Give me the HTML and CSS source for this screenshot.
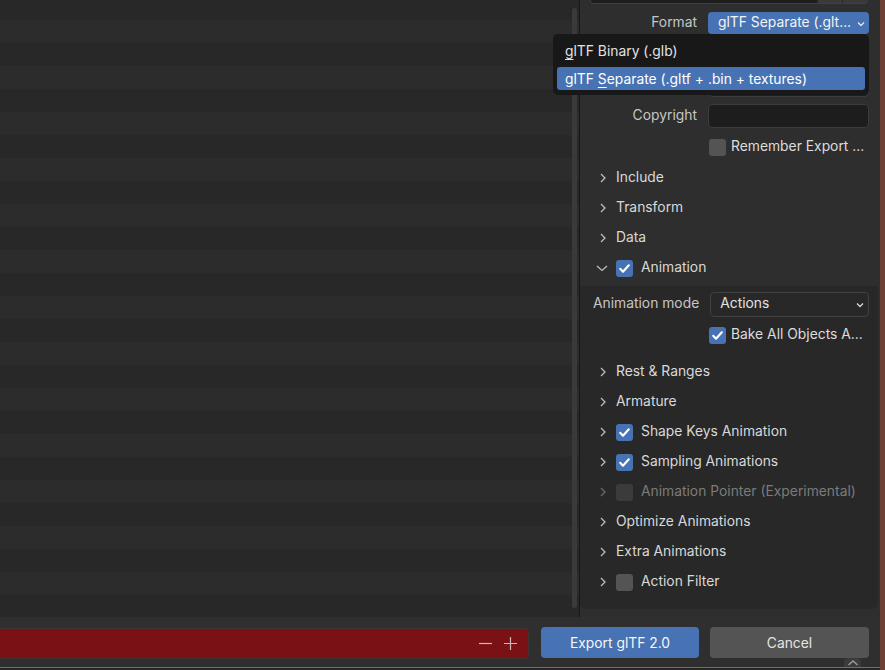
FILE: index.html
```html
<!DOCTYPE html>
<html>
<head>
<meta charset="utf-8">
<link rel="stylesheet" href="styles.css">
</head>
<body>
<div class="window">
  <div class="main">
    <div class="top">
      <div class="filelist"><div class="scrollbar"></div></div>
      <div class="sidebar">
        <div class="pathbox"><span class="pf"></span><span class="pb"></span><span class="pb"></span></div>

        <div class="prop first">
          <div class="plabel">Format</div>
          <div class="control dd-blue"><span>glTF Separate (.glt...</span><svg class="ddchev" width="8" height="6" viewBox="0 0 8 6"><path d="M1 1.5l3 3 3-3" fill="none" stroke="#e8e8e8" stroke-width="1.3"/></svg></div>
        </div>
        <div class="prop">
          <div class="plabel"></div>
          <div class="control check-ctl"><span class="cb"></span></div>
        </div>
        <div class="prop">
          <div class="plabel"></div>
          <div class="control field"></div>
        </div>
        <div class="prop">
          <div class="plabel">Copyright</div>
          <div class="control field"></div>
        </div>
        <div class="prop">
          <div class="plabel"></div>
          <div class="control check-ctl"><span class="cb"></span><span>Remember Export ...</span></div>
        </div>

        <div class="sections">
          <div class="sec"><svg class="chev" width="10" height="12" viewBox="0 0 10 12"><path d="M3 2l4 4-4 4" fill="none" stroke="#bdbdbd" stroke-width="1.3"/></svg><span>Include</span></div>
          <div class="sec"><svg class="chev" width="10" height="12" viewBox="0 0 10 12"><path d="M3 2l4 4-4 4" fill="none" stroke="#bdbdbd" stroke-width="1.3"/></svg><span>Transform</span></div>
          <div class="sec"><svg class="chev" width="10" height="12" viewBox="0 0 10 12"><path d="M3 2l4 4-4 4" fill="none" stroke="#bdbdbd" stroke-width="1.3"/></svg><span>Data</span></div>
          <div class="sec open"><svg class="chev down" width="14" height="10" viewBox="0 0 14 10"><path d="M2 3l5 4.5L12 3" fill="none" stroke="#bdbdbd" stroke-width="1.3"/></svg><span class="cb on"><svg width="17" height="17" viewBox="0 0 17 17"><path d="M4.2 8.8l2.8 2.9 5.8-6.4" fill="none" stroke="#fff" stroke-width="2.1" stroke-linecap="round" stroke-linejoin="round"/></svg></span><span>Animation</span></div>
        </div>

        <div class="subpanel">
          <div class="prop sub first">
            <div class="plabel left">Animation mode</div>
            <div class="control dd-dark"><span>Actions</span><svg class="ddchev" width="8" height="6" viewBox="0 0 8 6"><path d="M1 1.5l3 3 3-3" fill="none" stroke="#d8d8d8" stroke-width="1.3"/></svg></div>
          </div>
          <div class="prop sub">
            <div class="plabel"></div>
            <div class="control check-ctl"><span class="cb on"><svg width="17" height="17" viewBox="0 0 17 17"><path d="M4.2 8.8l2.8 2.9 5.8-6.4" fill="none" stroke="#fff" stroke-width="2.1" stroke-linecap="round" stroke-linejoin="round"/></svg></span><span>Bake All Objects A...</span></div>
          </div>
          <div class="subsecs">
            <div class="sec"><svg class="chev" width="10" height="12" viewBox="0 0 10 12"><path d="M3 2l4 4-4 4" fill="none" stroke="#bdbdbd" stroke-width="1.3"/></svg><span>Rest &amp; Ranges</span></div>
            <div class="sec"><svg class="chev" width="10" height="12" viewBox="0 0 10 12"><path d="M3 2l4 4-4 4" fill="none" stroke="#bdbdbd" stroke-width="1.3"/></svg><span>Armature</span></div>
            <div class="sec"><svg class="chev" width="10" height="12" viewBox="0 0 10 12"><path d="M3 2l4 4-4 4" fill="none" stroke="#bdbdbd" stroke-width="1.3"/></svg><span class="cb on"><svg width="17" height="17" viewBox="0 0 17 17"><path d="M4.2 8.8l2.8 2.9 5.8-6.4" fill="none" stroke="#fff" stroke-width="2.1" stroke-linecap="round" stroke-linejoin="round"/></svg></span><span>Shape Keys Animation</span></div>
            <div class="sec"><svg class="chev" width="10" height="12" viewBox="0 0 10 12"><path d="M3 2l4 4-4 4" fill="none" stroke="#bdbdbd" stroke-width="1.3"/></svg><span class="cb on"><svg width="17" height="17" viewBox="0 0 17 17"><path d="M4.2 8.8l2.8 2.9 5.8-6.4" fill="none" stroke="#fff" stroke-width="2.1" stroke-linecap="round" stroke-linejoin="round"/></svg></span><span>Sampling Animations</span></div>
            <div class="sec disabled"><svg class="chev" width="10" height="12" viewBox="0 0 10 12"><path d="M3 2l4 4-4 4" fill="none" stroke="#6a6a6a" stroke-width="1.3"/></svg><span class="cb dis"></span><span>Animation Pointer (Experimental)</span></div>
            <div class="sec"><svg class="chev" width="10" height="12" viewBox="0 0 10 12"><path d="M3 2l4 4-4 4" fill="none" stroke="#bdbdbd" stroke-width="1.3"/></svg><span>Optimize Animations</span></div>
            <div class="sec"><svg class="chev" width="10" height="12" viewBox="0 0 10 12"><path d="M3 2l4 4-4 4" fill="none" stroke="#bdbdbd" stroke-width="1.3"/></svg><span>Extra Animations</span></div>
            <div class="sec"><svg class="chev" width="10" height="12" viewBox="0 0 10 12"><path d="M3 2l4 4-4 4" fill="none" stroke="#bdbdbd" stroke-width="1.3"/></svg><span class="cb"></span><span>Action Filter</span></div>
          </div>
        </div>

        <div class="menu">
          <div class="mitem"><u>g</u>lTF Binary (.glb)</div>
          <div class="mitem active">glTF <u>S</u>eparate (.gltf + .bin + textures)</div>
        </div>
      </div>
    </div>
    <div class="bottombar">
      <div class="namefield">
        <svg width="13" height="13" viewBox="0 0 13 13"><path d="M0 6.5h13" stroke="#cdb6b6" stroke-width="1.2"/></svg>
        <svg width="13" height="13" viewBox="0 0 13 13"><path d="M0 6.5h13M6.5 0v13" stroke="#cdb6b6" stroke-width="1.2"/></svg>
      </div>
      <div class="btn primary">Export glTF 2.0</div>
      <div class="btn">Cancel</div>
      <div class="uptab"><svg width="12" height="7" viewBox="0 0 12 7"><path d="M1.5 6l4.5-4 4.5 4" fill="none" stroke="#9a9a9a" stroke-width="1.5"/></svg></div>
    </div>
    <div class="footer"></div>
  </div>
  <div class="edge"></div>
</div>
</body>
</html>
```

FILE: styles.css
```css
* { box-sizing: border-box; }
html, body { margin: 0; padding: 0; }
body {
  width: 885px;
  height: 670px;
  overflow: hidden;
  background: #2e2e2e;
  font-family: Inter, "Noto Sans", sans-serif;
  font-size: 13.85px;
  color: #d9d9d9;
}
.window { display: flex; width: 885px; height: 670px; }
.main { width: 880px; display: flex; flex-direction: column; }
.edge { width: 5px; background: #6b4136; }

.top { display: flex; height: 617px; }
.filelist {
  width: 579px;
  background: repeating-linear-gradient(to bottom, #282828 0 20px, #2c2c2c 20px 43px, #282828 43px 46px);
  display: flex;
  justify-content: flex-end;
  padding: 8px 2px 9px 0;
}
.scrollbar { width: 5px; background: #3a3a3a; border-radius: 3px; }

.sidebar {
  width: 301px;
  border-left: 1px solid #171717;
  background: #2e2e2e;
  position: relative;
}
.pathbox {
  display: flex;
  height: 4px;
  margin: 0 12px 0 10px;
  border: 1px solid #3f3f3f;
  border-top: none;
  border-radius: 0 0 4px 4px;
  overflow: hidden;
}
.pf { flex: 1; background: #1d1d1d; }
.pb { width: 25px; background: #3a3a3a; border-left: 1px solid #2a2a2a; }

.prop { display: flex; align-items: center; height: 24px; margin-top: 7px; padding-right: 11px; }
.prop.first { margin-top: 7px; }
.plabel { flex: 1; text-align: right; padding-right: 11px; padding-bottom: 2px; color: #c6c6c6; white-space: nowrap; }
.plabel.left { text-align: left; padding-left: 13px; }
.control { width: 161px; height: 24px; display: flex; align-items: center; white-space: nowrap; }
.control > span:not(.cb) { padding-bottom: 2px; }
.dd-blue {
  height: 22px;
  background: #4772b3;
  border-radius: 4px;
  color: #f4f4f4;
  padding: 0 4px 0 10px;
  justify-content: space-between;
}
.dd-dark {
  height: 25px;
  background: #282828;
  border: 1px solid #414141;
  border-radius: 4px;
  color: #e2e2e2;
  padding: 0 4px 0 9px;
  justify-content: space-between;
}
.ddchev { margin-top: 1px; flex: none; }
.field { background: #1d1d1d; border: 1px solid #3c3c3c; border-radius: 4px; }
.check-ctl { padding-left: 1px; color: #dcdcdc; }
.check-ctl .cb { margin-right: 5px; }

.cb {
  display: inline-flex;
  width: 17px;
  height: 17px;
  border-radius: 3px;
  background: #545454;
  flex: none;
}
.cb.on { background: #4772b3; }
.cb.dis { background: #3b3b3b; }

.sections { margin-top: 4px; }
.sec { display: flex; align-items: center; height: 30px; padding-left: 18px; color: #d8d8d8; white-space: nowrap; }
.sec > span:not(.cb) { padding-bottom: 2px; }
.sec .chev { margin-right: 8px; flex: none; }
.sec .chev.down { margin-left: -3px; margin-right: 7px; }
.sec .cb { margin-right: 8px; }
.sec.open { height: 33px; padding-bottom: 3px; }
.sec.disabled { color: #7b7b7b; }

.subpanel {
  margin-right: 2px;
  background: #282828;
  border-radius: 0 0 6px 6px;
  padding: 6px 0 12px;
}
.prop.sub { padding-right: 9px; }
.prop.sub.first { margin-top: 0; }
.subsecs { margin-top: 10px; }

.menu {
  position: absolute;
  left: -27px;
  top: 34px;
  width: 316px;
  height: 61px;
  background: #181818;
  border-radius: 5px;
  padding: 5px 4px;
  display: flex;
  flex-direction: column;
  gap: 5px;
  color: #e2e2e2;
}
.mitem { height: 23px; line-height: 21px; padding: 2px 0 0 8px; border-radius: 3px; white-space: nowrap; }
.mitem.active { background: #4772b3; color: #fff; }
.mitem u { text-decoration-thickness: 1px; text-underline-offset: 3px; }

.bottombar {
  height: 51px;
  display: flex;
  align-items: flex-start;
  padding-top: 10px;
  background: #2f2f2f;
  border-bottom: 1px solid #6f6f6f;
  position: relative;
}
.namefield {
  width: 529px;
  height: 31px;
  margin-top: 1px;
  background: #7a1114;
  border: 1px solid #3e3232;
  border-left: none;
  border-radius: 0 4px 4px 0;
  display: flex;
  align-items: center;
  justify-content: flex-end;
  gap: 12px;
  padding-right: 11px;
}
.btn {
  width: 159px;
  height: 31px;
  margin-left: 11px;
  border-radius: 4px;
  background: #545454;
  color: #e4e4e4;
  display: flex;
  align-items: center;
  justify-content: center;
}
.btn.primary { width: 158px; margin-left: 12px; background: #4772b3; color: #f6f6f6; }
.uptab {
  position: absolute;
  left: 844px;
  bottom: 0;
  width: 17px;
  height: 9px;
  background: #3b3b3b;
  border-radius: 4px 4px 0 0;
  display: flex;
  justify-content: center;
  align-items: flex-start;
  padding-top: 1px;
}
.footer { height: 2px; background: #262626; }
```
